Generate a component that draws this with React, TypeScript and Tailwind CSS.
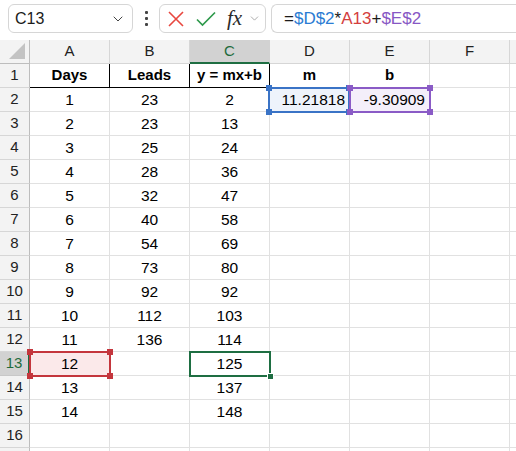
import { ChevronDown } from 'lucide-react';

const days = ['1', '2', '3', '4', '5', '6', '7', '8', '9', '10', '11', '12', '13', '14'];
const leads = ['23', '23', '25', '28', '32', '40', '54', '73', '92', '112', '136'];
const yVals = ['2', '13', '24', '36', '47', '58', '69', '80', '92', '103', '114', '125', '137', '148'];

const cols = ['A', 'B', 'C', 'D', 'E', 'F'];

function Handle({ pos, color }: { pos: string; color: string }) {
  return <span className={`absolute w-[6px] h-[6px] ${pos} ${color}`} />;
}

function FormulaBar() {
  return (
    <div className="h-[40px] flex items-start pt-[4px] bg-white">
      <div className="ml-[8px] w-[125px] h-[29px] rounded-[6px] border border-[#d6d6d6] flex items-center pl-[6px] pr-[6px] text-[16px] text-[#1b1b1b]">
        <span className="flex-1">C13</span>
        <ChevronDown className="w-[16px] h-[16px] text-[#444]" strokeWidth={1.5} />
      </div>
      <div className="w-[26px] h-[29px] flex flex-col items-center justify-center gap-[3px]">
        <span className="w-[3px] h-[3px] bg-[#444] rounded-[1px]" />
        <span className="w-[3px] h-[3px] bg-[#444] rounded-[1px]" />
        <span className="w-[3px] h-[3px] bg-[#444] rounded-[1px]" />
      </div>
      <div className="w-[107px] h-[29px] rounded-[6px] border border-[#d6d6d6] flex items-center pl-[6px]">
        <svg width="18" height="18" viewBox="0 0 18 18" className="ml-[1px]">
          <path d="M2 2 L16 16 M16 2 L2 16" stroke="#e8473f" strokeWidth="1.6" fill="none" />
        </svg>
        <svg width="22" height="18" viewBox="0 0 22 18" className="ml-[10px]">
          <path d="M2 9.5 L7.5 15 L20 2.5" stroke="#2f9a4c" strokeWidth="1.7" fill="none" />
        </svg>
        <span className="ml-[10px] text-[21px] italic text-[#2a2a2a] leading-none" style={{ fontFamily: '"Liberation Serif", serif' }}>
          fx
        </span>
        <ChevronDown className="ml-[6px] w-[13px] h-[13px] text-[#9a9a9a]" strokeWidth={1.5} />
      </div>
      <div className="ml-[5px] flex-1 h-[29px] rounded-l-[6px] border border-r-0 border-[#d6d6d6] flex items-center pl-[12px] text-[17px] text-[#1b1b1b]">
        <span>=</span>
        <span className="text-[#2b7cd3]">$D$2</span>
        <span>*</span>
        <span className="text-[#d4403e]">A13</span>
        <span>+</span>
        <span className="text-[#8757c4]">$E$2</span>
      </div>
    </div>
  );
}

function cellText(row: number, col: number): string {
  if (row === 1) return ['Days', 'Leads', 'y = mx+b', 'm', 'b', ''][col];
  const i = row - 2;
  if (col === 0) return days[i] ?? '';
  if (col === 1) return leads[i] ?? '';
  if (col === 2) return yVals[i] ?? '';
  if (row === 2 && col === 3) return '11.21818';
  if (row === 2 && col === 4) return '-9.30909';
  return '';
}

function Cell({ row, col }: { row: number; col: number }) {
  const text = cellText(row, col);
  const header = row === 1;
  const tableBorder = header && col <= 2;
  let bg = 'bg-white';
  if (row === 2 && col === 3) bg = 'bg-[#eef3fb]';
  if (row === 2 && col === 4) bg = 'bg-[#f4effa]';
  if (row === 13 && col === 0) bg = 'bg-[#fbe9ea]';
  const align = row === 2 && col >= 3 ? 'justify-end pr-[4px]' : 'justify-center';

  return (
    <div
      className={`relative h-[24px] flex items-center ${align} ${bg} border-r border-b ${
        tableBorder ? 'border-r-black border-b-black' : 'border-[#e1e1e1]'
      } ${header ? 'font-bold' : 'text-[15.5px]'}`}
    >
      <span className="whitespace-nowrap">{text}</span>
      {row === 2 && col === 3 && (
        <div className="absolute -left-[2px] -top-px w-[82px] h-[26px] border-2 border-[#3a73c6] z-10">
          <Handle pos="-left-[4px] -top-[4px]" color="bg-[#3a73c6]" />
          <Handle pos="-right-[4px] -top-[4px]" color="bg-[#3a73c6]" />
          <Handle pos="-left-[4px] -bottom-[4px]" color="bg-[#3a73c6]" />
          <Handle pos="-right-[4px] -bottom-[4px]" color="bg-[#3a73c6]" />
        </div>
      )}
      {row === 2 && col === 4 && (
        <div className="absolute -left-px -top-px w-[82px] h-[26px] border-2 border-[#8a5bc6] z-10">
          <Handle pos="-left-[4px] -top-[4px]" color="bg-[#8a5bc6]" />
          <Handle pos="-right-[4px] -top-[4px]" color="bg-[#8a5bc6]" />
          <Handle pos="-left-[4px] -bottom-[4px]" color="bg-[#8a5bc6]" />
          <Handle pos="-right-[4px] -bottom-[4px]" color="bg-[#8a5bc6]" />
        </div>
      )}
      {row === 13 && col === 0 && (
        <div className="absolute -left-px -top-px w-[82px] h-[26px] border-2 border-[#c4363d] z-10">
          <Handle pos="-left-[4px] -top-[4px]" color="bg-[#c4363d]" />
          <Handle pos="-right-[4px] -top-[4px]" color="bg-[#c4363d]" />
          <Handle pos="-left-[4px] -bottom-[4px]" color="bg-[#c4363d]" />
          <Handle pos="-right-[4px] -bottom-[4px]" color="bg-[#c4363d]" />
        </div>
      )}
      {row === 13 && col === 2 && (
        <div className="absolute -left-px -top-px w-[82px] h-[26px] border-2 border-[#1e6e42] z-10">
          <span className="absolute -right-[5px] -bottom-[5px] w-[7px] h-[7px] bg-[#1e6e42] border border-white" />
        </div>
      )}
    </div>
  );
}

export default function App() {
  const rows = Array.from({ length: 17 }, (_, i) => i + 1);

  return (
    <div
      className="w-[516px] h-[451px] overflow-hidden bg-white text-[15px] text-black"
      style={{ fontFamily: '"Liberation Sans", Arial, sans-serif' }}
    >
      <FormulaBar />
      <div className="grid grid-cols-[30px_repeat(6,80px)_80px]">
        {/* column headers */}
        <div className="relative h-[24px] bg-[#f3f3f3] border-r border-b border-[#bdbdbd]">
          <svg width="18" height="18" viewBox="0 0 18 18" className="absolute right-[3px] bottom-[3px]">
            <path d="M17 1 L17 17 L1 17 Z" fill="#c3c3c3" />
          </svg>
        </div>
        {cols.map((c) => (
          <div
            key={c}
            className={`h-[24px] flex items-center justify-center border-r ${
              c === 'C'
                ? 'bg-[#d2d2d2] text-[#1e6b3c] border-b-2 border-b-[#1e6e42] border-r-[#d2d2d2]'
                : 'bg-[#f3f3f3] text-[#222] border-b border-[#d6d6d6]'
            }`}
          >
            {c}
          </div>
        ))}
        <div className="h-[24px] bg-[#f3f3f3] border-b border-[#d6d6d6]" />

        {rows.map((r) => (
          <div key={r} className="contents">
            <div
              className={`h-[24px] flex items-center justify-center ${
                r === 13
                  ? 'bg-[#d2d2d2] text-[#1e6b3c] border-r-2 border-r-[#1e6e42] border-b border-b-[#c8c8c8]'
                  : 'bg-[#f3f3f3] text-[#222] border-r border-b border-r-[#bdbdbd] border-b-[#d6d6d6]'
              }`}
            >
              {r < 17 ? r : ''}
            </div>
            {cols.map((_, ci) => (
              <Cell key={ci} row={r} col={ci} />
            ))}
            <div className="h-[24px] border-b border-[#e1e1e1]" />
          </div>
        ))}
      </div>
    </div>
  );
}
